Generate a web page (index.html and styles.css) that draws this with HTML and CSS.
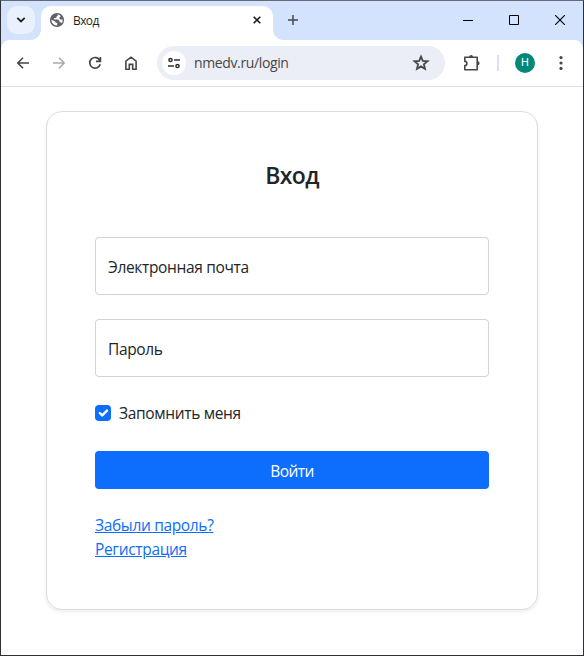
FILE: index.html
```html
<!DOCTYPE html>
<html lang="ru">
<head>
<meta charset="utf-8">
<title>Вход</title>
<link rel="stylesheet" href="styles.css">
</head>
<body>
<div class="window">
  <header class="tabstrip">
    <button class="tab-search" aria-label="Поиск вкладок"><svg width="10" height="6" viewBox="0 0 10 6"><path d="M1.3 .9 5 4.5 8.7 .9" fill="none" stroke="#1f1f1f" stroke-width="1.8"/></svg></button>
    <div class="tab">
      <svg class="globe" width="16" height="16" viewBox="0 0 16 16"><circle cx="8" cy="8" r="7.1" fill="#5f6368"/><path d="M8.6 2.4 8.8 3.9 7.5 4.6 7.3 6H5.2v1.6h4.1l1.1 1.1.1 1.5h1.3l1.2 1.1A5.6 5.6 0 0 0 13.5 7.2l-1.7.5-1.4-1.2.2-1.5 1.3-.8A5.6 5.6 0 0 0 8.6 2.4ZM2.4 7.7l3.4 1.5.8 1.2 1.7.5-.3 2.7A5.6 5.6 0 0 1 2.4 7.7Z" fill="#fff"/></svg>
      <span class="tab-title">Вход</span>
      <svg class="tab-close" width="8" height="8" viewBox="0 0 8 8"><path d="m.7.7 6.6 6.6M7.3.7.7 7.3" stroke="#1f1f1f" stroke-width="1.6"/></svg>
    </div>
    <svg class="plus" width="10" height="10" viewBox="0 0 10 10"><path d="M5 0v10M0 5h10" stroke="#474747" stroke-width="1.5"/></svg>
    <div class="controls">
      <svg width="10" height="10" viewBox="0 0 10 10"><path d="M0 5.5h10" stroke="#000"/></svg>
      <svg width="10" height="10" viewBox="0 0 10 10"><path d="M.5.5h9v9h-9z" fill="none" stroke="#000"/></svg>
      <svg width="10" height="10" viewBox="0 0 10 10"><path d="m0 0 10 10M10 0 0 10" stroke="#000" stroke-width="1.1"/></svg>
    </div>
  </header>
  <nav class="toolbar">
    <div class="nav-icons">
      <svg width="16" height="16" viewBox="0 0 16 16"><path d="M14 8H3M8 2.8 2.8 8 8 13.2" fill="none" stroke="#474747" stroke-width="1.6"/></svg>
      <svg width="16" height="16" viewBox="0 0 16 16"><path d="M2 8h11M8 2.8 13.2 8 8 13.2" fill="none" stroke="#ababab" stroke-width="1.6"/></svg>
      <svg width="16" height="16" viewBox="0 0 16 16"><path d="M12.8 5.4A5.3 5.3 0 1 0 13.2 9.2M13.4 2v4.4H9" fill="none" stroke="#474747" stroke-width="1.7"/></svg>
      <svg width="16" height="16" viewBox="0 0 16 16"><path d="M2.9 6.2 8 2.2l5.1 4v8H9.7V9.4H6.3v4.8H2.9Z" fill="none" stroke="#474747" stroke-width="1.6"/></svg>
    </div>
    <div class="address">
      <span class="site-info"><svg width="14" height="14" viewBox="0 0 14 14"><path d="M7 4h6M1 10h6" stroke="#303030" stroke-width="1.6"/><circle cx="3.5" cy="4" r="1.6" fill="none" stroke="#303030" stroke-width="1.5"/><circle cx="10.5" cy="10" r="1.6" fill="none" stroke="#303030" stroke-width="1.5"/></svg></span>
      <span class="url">nmedv.ru/login</span>
      <svg class="star" width="18" height="18" viewBox="0 0 18 18"><path d="m9 2.6 1.8 4.3 4.7.4-3.6 3 1.1 4.6-4-2.5-4 2.5 1.1-4.6-3.6-3 4.7-.4Z" fill="none" stroke="#474747" stroke-width="1.8"/></svg>
    </div>
    <svg class="puzzle" width="18" height="18" viewBox="0 0 18 18"><path d="M1.8 3.2H14.2v12.6H1.8v-4.2a2.1 2.1 0 0 0 0-4.2Z" fill="none" stroke="#474747" stroke-width="1.6" stroke-linejoin="round"/><path d="M6.2 3a1.9 1.9 0 0 1 3.8 0ZM14.6 7.3a2 2 0 0 1 0 4Z" fill="#474747"/></svg>
    <span class="divider"></span>
    <span class="avatar">Н</span>
    <svg class="dots" width="4" height="16" viewBox="0 0 4 16"><g fill="#474747"><circle cx="2" cy="2.6" r="1.6"/><circle cx="2" cy="8" r="1.6"/><circle cx="2" cy="13.4" r="1.6"/></g></svg>
  </nav>
  <main class="page">
    <form class="card">
      <h1>Вход</h1>
      <div class="field">Электронная почта</div>
      <div class="field">Пароль</div>
      <label class="check"><span class="box"><svg width="16" height="16" viewBox="0 0 20 20"><path fill="none" stroke="#fff" stroke-linecap="round" stroke-linejoin="round" stroke-width="3" d="m6 10 3 3 6-6"/></svg></span><span>Запомнить меня</span></label>
      <button class="submit" type="button">Войти</button>
      <div class="links"><a href="#">Забыли пароль?</a><a href="#">Регистрация</a></div>
    </form>
  </main>
</div>
</body>
</html>
```
FILE: styles.css
```css
* { box-sizing: border-box; }
body { margin: 0; font-family: "Open Sans", "Noto Sans", sans-serif; color: #212529; }
svg { display: block; flex: none; }
button { border: 0; padding: 0; font: inherit; letter-spacing: inherit; }
.window { width: 584px; height: 656px; border: 1px solid #303033; border-top-color: #666a78; background: #fff; display: flex; flex-direction: column; overflow: hidden; }

.tabstrip { height: 39px; flex: none; background: #d3e3fd; display: flex; padding: 5px 0 0 6px; }
.tab-search { width: 28px; height: 28px; border-radius: 10px; background: #e9f1fe; display: flex; align-items: center; justify-content: center; }
.tab { position: relative; width: 232px; height: 34px; margin-left: 6px; border-radius: 10px 10px 0 0; background: #fff; display: flex; align-items: center; padding: 0 12px 6px 8px; }
.tab::before, .tab::after { content: ""; position: absolute; bottom: 0; width: 10px; height: 10px; }
.tab::before { left: -10px; background: radial-gradient(circle at 0 0, transparent 9.5px, #fff 10px); }
.tab::after { right: -10px; background: radial-gradient(circle at 100% 0, transparent 9.5px, #fff 10px); }
.tab-title { margin: 1px 0 0 8px; font-size: 12px; line-height: 16px; letter-spacing: -.6px; color: #1f1f1f; flex: 1; }
.plus { margin: 9px 0 0 15px; }
.controls { margin: 9px 18px 0 auto; display: flex; gap: 36px; }

.toolbar { height: 47px; flex: none; display: flex; align-items: center; padding: 0 20px 1px 14px; border-bottom: 1px solid #dfe1e5; position: relative; background: #fff; }
.toolbar::before, .toolbar::after { content: ""; position: absolute; top: 0; width: 8px; height: 8px; }
.toolbar::before { left: 0; background: radial-gradient(circle at 100% 100%, transparent 7.5px, #d3e3fd 8px); }
.toolbar::after { right: 0; background: radial-gradient(circle at 0 100%, transparent 7.5px, #d3e3fd 8px); }
.nav-icons { display: flex; gap: 20px; }
.address { width: 288px; height: 34px; margin-left: 18px; border-radius: 17px; background: #ebeef7; display: flex; align-items: center; padding: 0 15px 0 5px; }
.site-info { width: 24px; height: 24px; border-radius: 50%; background: #fff; display: flex; align-items: center; justify-content: center; }
.url { margin-left: 8px; font-size: 14px; line-height: 20px; letter-spacing: -.37px; color: #474747; flex: 1; }
.puzzle { margin-left: 18px; }
.divider { width: 2px; height: 16px; margin-left: 16px; background: #d3e3fd; }
.avatar { width: 20px; height: 20px; margin-left: 16px; border-radius: 50%; background: #00897b; color: #fff; font: 11px/20px Roboto, sans-serif; text-align: center; }
.dots { margin-left: 24px; }

.page { flex: 1; padding: 24px 45px 0; }
.card { height: 499px; border: 1px solid #dcdddf; border-radius: 16px; padding: 48px; background: #fff; box-shadow: 0 2px 4px rgba(0,0,0,.075); font-size: 15.5px; line-height: 24px; letter-spacing: -.34px; }
h1 { margin: 0 0 48px; font-size: 23px; line-height: 31px; height: 29px; font-weight: 600; letter-spacing: -.65px; text-align: center; }
.field { height: 58px; margin-bottom: 24px; padding: 17px 12px 15px; border: 1px solid #ced4da; border-radius: 4px; }
.check { display: flex; align-items: center; height: 24px; margin-bottom: 26px; }
.box { width: 16px; height: 16px; margin-right: 8px; border-radius: 4px; background: #0d6efd; }
.submit { display: block; width: 100%; height: 38px; margin-bottom: 24px; border-radius: 4px; background: #0d6efd; color: #fff; padding-top: 1px; letter-spacing: -.6px; }
.links { display: flex; flex-direction: column; align-items: flex-start; }
.links a { color: #0d6efd; text-decoration: underline; }
```
